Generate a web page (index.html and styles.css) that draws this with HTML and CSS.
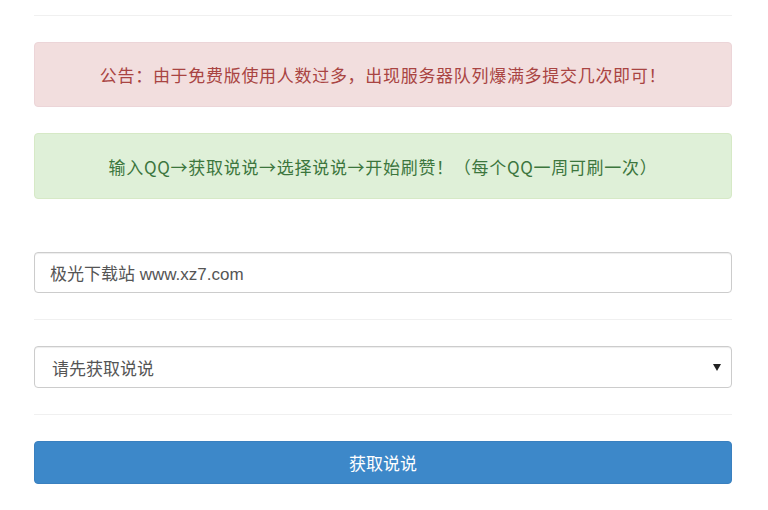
FILE: index.html
```html
<!DOCTYPE html>
<html lang="zh-CN">
<head>
<meta charset="utf-8">
<title>QQ说说刷赞</title>
<link rel="stylesheet" href="styles.css">
</head>
<body>
<div class="page">
  <hr class="rule">
  <div class="alert alert-danger">公告：由于免费版使用人数过多，出现服务器队列爆满多提交几次即可！</div>
  <div class="alert alert-success">输入QQ→获取说说→选择说说→开始刷赞！（每个QQ一周可刷一次）</div>
  <input class="field field-input" type="text" value="极光下载站 www.xz7.com">
  <hr class="rule">
  <div class="field field-select">
    <span class="select-text">请先获取说说</span>
    <svg class="caret" width="8" height="7" viewBox="0 0 8 7"><path d="M0 0 H8 L4 7 Z" fill="#222"/></svg>
  </div>
  <hr class="rule">
  <button class="btn" type="button">获取说说</button>
</div>
</body>
</html>
```

FILE: styles.css
```css
html, body {
  margin: 0;
  padding: 0;
  background: #ffffff;
}

body {
  font-family: "Liberation Sans", "Noto Sans CJK SC", sans-serif;
  font-size: 17px;
  color: #555555;
}

.page {
  width: 698px;
  margin-left: 34px;
  padding-top: 15px;
  display: flex;
  flex-direction: column;
  gap: 26px;
}

.rule {
  margin: 0;
  border: 0;
  height: 1px;
  background: #f0f0f0;
}

.alert {
  box-sizing: border-box;
  height: 65px;
  border: 1px solid transparent;
  border-radius: 4px;
  display: flex;
  align-items: center;
  justify-content: center;
  font-family: "Noto Sans CJK SC", sans-serif;
  font-size: 17px;
  letter-spacing: 0.7px;
}

.alert-danger {
  background: #f2dede;
  border-color: #ecd5d8;
  color: #a94442;
}

.alert-success {
  background: #dff0d8;
  border-color: #d6e9c6;
  color: #3c763d;
  height: 66px;
}

.field {
  box-sizing: border-box;
  width: 100%;
  border: 1px solid #cccccc;
  border-radius: 4px;
  background: #ffffff;
  box-shadow: inset 0 1px 1px rgba(0, 0, 0, 0.075);
  font-family: "Liberation Sans", "Noto Sans CJK SC", sans-serif;
  font-size: 17px;
  color: #555555;
}

.field-input {
  height: 41px;
  margin: 27px 0 0 0;
  padding: 0 15px;
  outline: none;
}

.field-select {
  height: 42px;
  padding: 0 10px 0 17px;
  display: flex;
  align-items: center;
  justify-content: space-between;
}

.caret {
  display: block;
}

.btn {
  height: 43px;
  border: 1px solid #3a80bf;
  border-radius: 4px;
  background: #3d88c9;
  color: #ffffff;
  font-family: "Liberation Sans", "Noto Sans CJK SC", sans-serif;
  font-size: 17px;
  padding: 0;
  cursor: pointer;
}
```
